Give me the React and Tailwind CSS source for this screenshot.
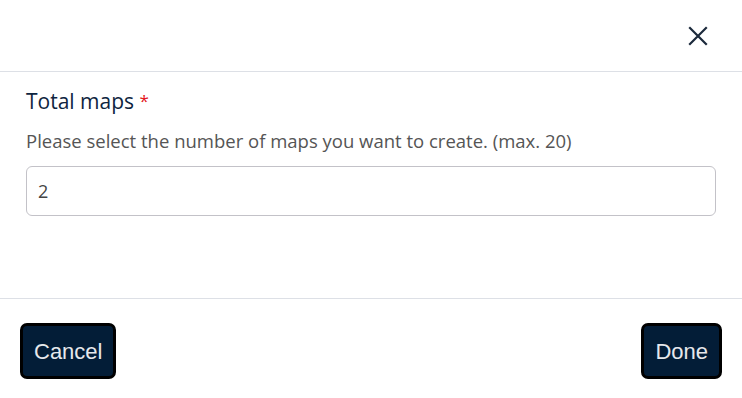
export default function App() {
  return (
    <div className="w-[742px] h-[398px] bg-white flex flex-col">
      <div className="h-[72px] flex items-center justify-end pr-[34px] border-b border-[#dde0e6] shrink-0">
        <svg width="20" height="20" viewBox="0 0 20 20" className="text-[#1c2a3c]">
          <path d="M2 2L18 18M18 2L2 18" stroke="currentColor" strokeWidth="2.2" strokeLinecap="square" />
        </svg>
      </div>
      <div className="flex-1 px-[26px] pt-[15px] font-['Open_Sans',sans-serif]">
        <div className="text-[21px] leading-[28px] text-[#0e2440]">
          Total maps <span className="text-[#e4141b] text-[17px] align-top">*</span>
        </div>
        <div className="mt-[13px] text-[18.5px] leading-[25px] text-[#555555]">
          Please select the number of maps you want to create. (max. 20)
        </div>
        <div className="mt-[13px] h-[50px] w-[690px] border border-[#c3c2c8] rounded-[6px] flex items-center px-[11px] text-[18px] text-[#444444]">
          2
        </div>
      </div>
      <div className="h-[100px] shrink-0 border-t border-[#dde0e6] flex items-start justify-between px-[20px] pt-[24px] font-['Liberation_Sans',Arial,sans-serif]">
        <button className="h-[56px] px-[11px] bg-[#031d37] border-[3px] border-black rounded-[7px] text-[#e6e8ec] text-[22px]">
          Cancel
        </button>
        <button className="h-[56px] px-[11px] bg-[#031d37] border-[3px] border-black rounded-[7px] text-[#e6e8ec] text-[22px]">
          Done
        </button>
      </div>
    </div>
  );
}
